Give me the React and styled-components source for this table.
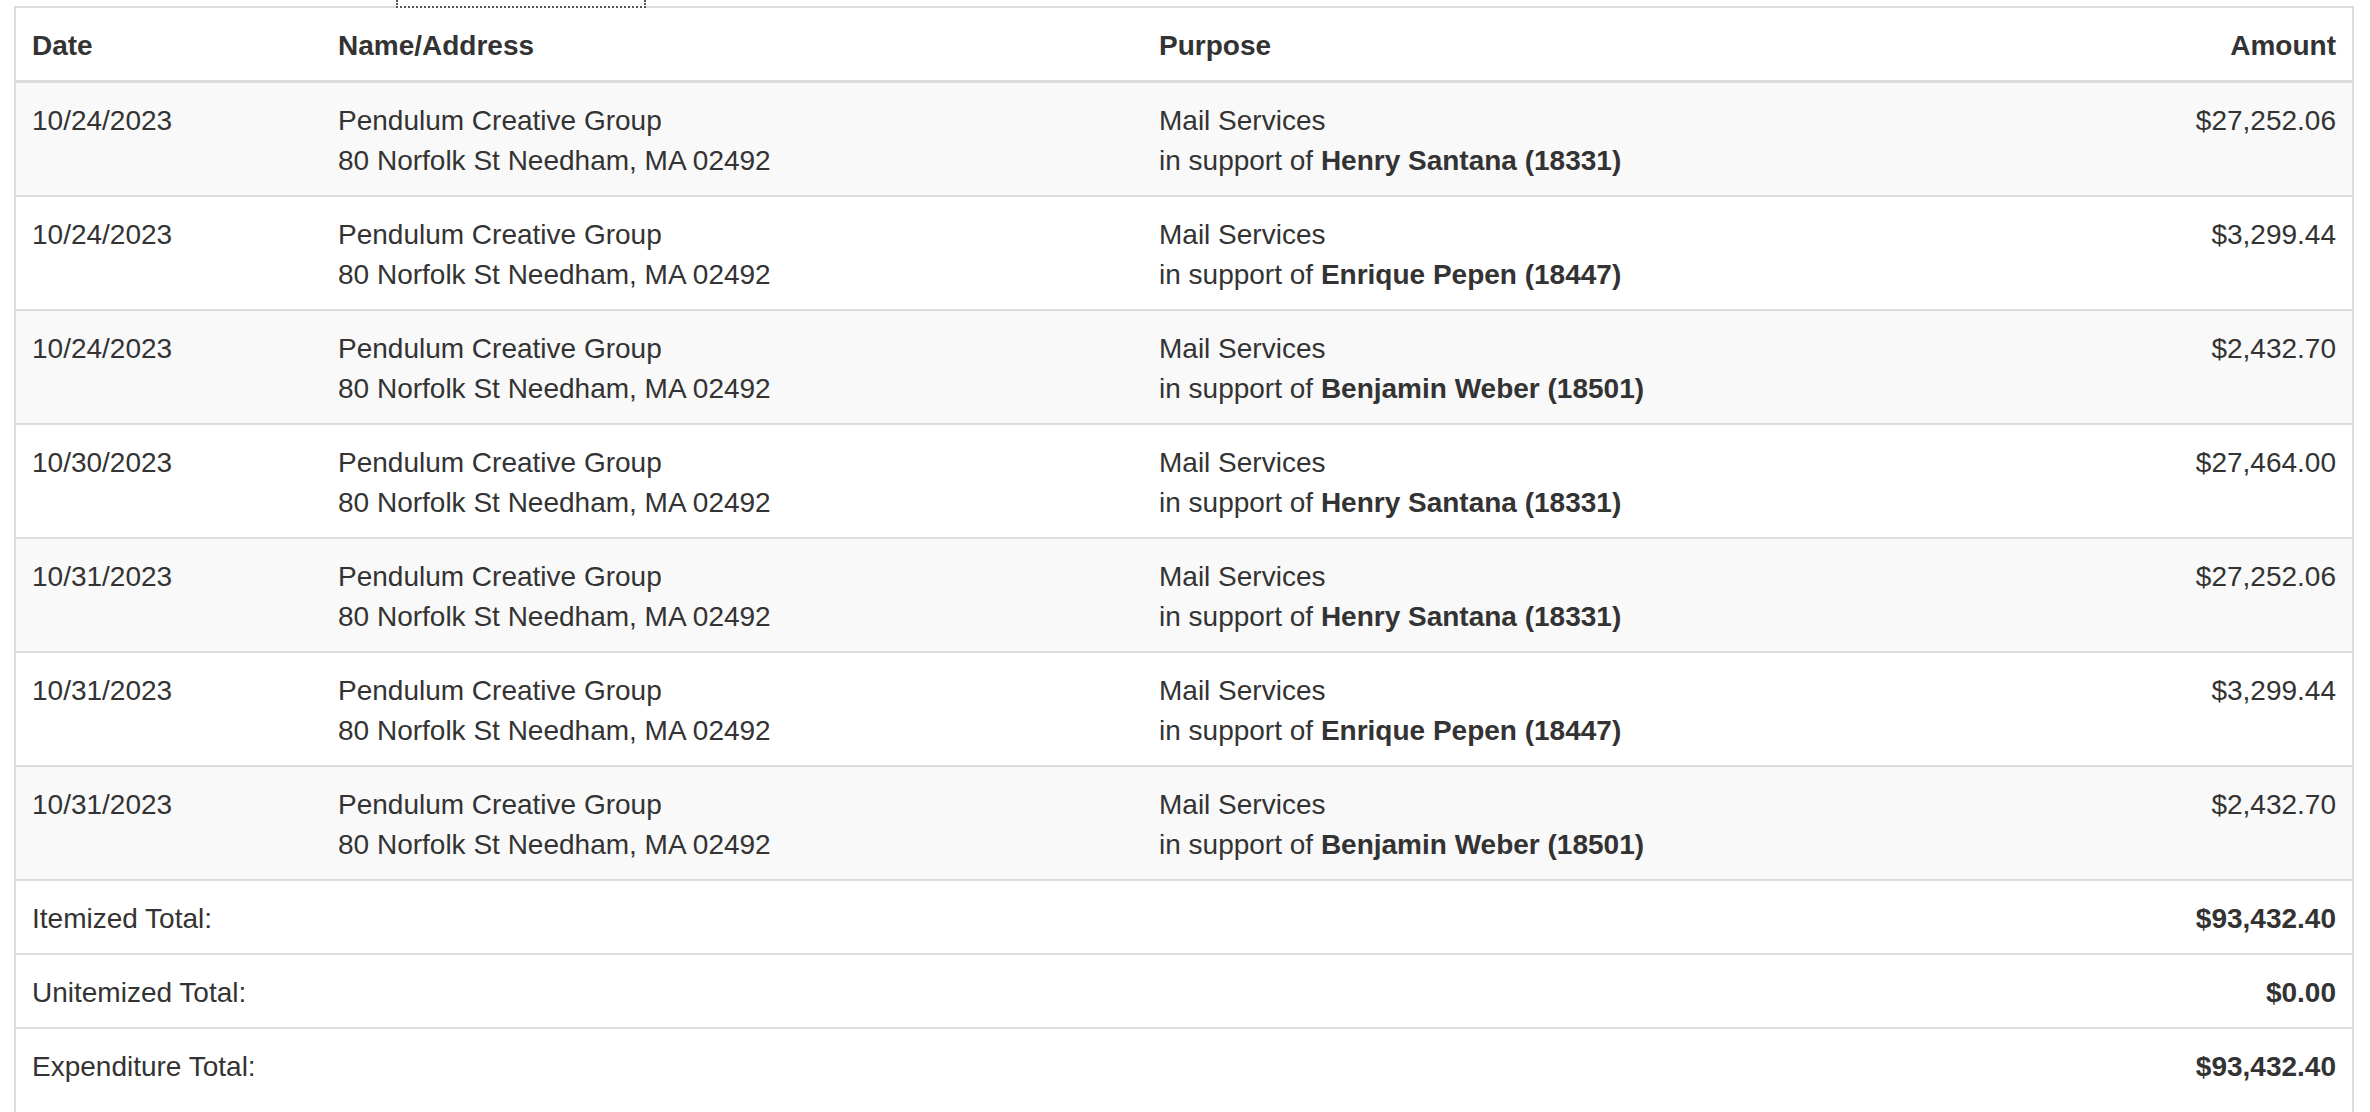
import React from 'react';
import styled, { createGlobalStyle } from 'styled-components';

const GlobalStyle = createGlobalStyle`
  html, body {
    margin: 0;
    padding: 0;
    background: #fff;
  }
  body {
    font-family: "Liberation Sans", Arial, Helvetica, sans-serif;
    font-size: 28px;
    line-height: 40px;
    color: #333;
  }
`;

const Page = styled.div`
  padding: 0 16px 0 14px;
`;

const TabBar = styled.div`
  display: flex;
  height: 6px;
`;

const ActiveTab = styled.div`
  position: relative;
  z-index: 1;
  margin-left: 382px;
  width: 250px;
  height: 8px;
  background: #fff;
  box-sizing: border-box;
  border: 2px dotted #555;
  border-top: none;
`;

const Panel = styled.div`
  border: 2px solid #ddd;
  border-bottom: none;
  padding-bottom: 40px;
`;

const Table = styled.table`
  width: 100%;
  border-collapse: collapse;
  table-layout: fixed;
`;

const HeadCell = styled.th`
  padding: 18px 16px 14px;
  font-weight: bold;
  text-align: ${p => (p.$right ? 'right' : 'left')};
  vertical-align: bottom;
  border-bottom: 3px solid #ddd;
`;

const Row = styled.tr`
  background: ${p => (p.$striped ? '#f9f9f9' : '#fff')};
  border-top: 2px solid #ddd;
  &:first-child {
    border-top: none;
  }
`;

const Cell = styled.td`
  padding: 18px 16px 14px;
  vertical-align: top;
  text-align: ${p => (p.$right ? 'right' : 'left')};
  font-weight: ${p => (p.$bold ? 'bold' : 'normal')};
  white-space: nowrap;
`;

const Line = styled.div`
  line-height: 40px;
`;

const Candidate = styled.strong`
  font-weight: bold;
`;

const TotalsBody = styled.tbody`
  border-top: 2px solid #ddd;
`;

const rows = [
  { date: '10/24/2023', cand: 'Henry Santana (18331)', amount: '$27,252.06' },
  { date: '10/24/2023', cand: 'Enrique Pepen (18447)', amount: '$3,299.44' },
  { date: '10/24/2023', cand: 'Benjamin Weber (18501)', amount: '$2,432.70' },
  { date: '10/30/2023', cand: 'Henry Santana (18331)', amount: '$27,464.00' },
  { date: '10/31/2023', cand: 'Henry Santana (18331)', amount: '$27,252.06' },
  { date: '10/31/2023', cand: 'Enrique Pepen (18447)', amount: '$3,299.44' },
  { date: '10/31/2023', cand: 'Benjamin Weber (18501)', amount: '$2,432.70' },
];

const totals = [
  { label: 'Itemized Total:', value: '$93,432.40' },
  { label: 'Unitemized Total:', value: '$0.00' },
  { label: 'Expenditure Total:', value: '$93,432.40' },
];

export default function App() {
  return (
    <>
      <GlobalStyle />
      <Page>
        <TabBar>
          <ActiveTab />
        </TabBar>
        <Panel>
          <Table>
            <colgroup>
              <col style={{ width: 306 }} />
              <col style={{ width: 821 }} />
              <col />
              <col style={{ width: 360 }} />
            </colgroup>
            <thead>
              <tr>
                <HeadCell>Date</HeadCell>
                <HeadCell>Name/Address</HeadCell>
                <HeadCell>Purpose</HeadCell>
                <HeadCell $right>Amount</HeadCell>
              </tr>
            </thead>
            <tbody>
              {rows.map((r, i) => (
                <Row key={i} $striped={i % 2 === 0}>
                  <Cell>{r.date}</Cell>
                  <Cell>
                    <Line>Pendulum Creative Group</Line>
                    <Line>80 Norfolk St Needham, MA 02492</Line>
                  </Cell>
                  <Cell>
                    <Line>Mail Services</Line>
                    <Line>
                      in support of <Candidate>{r.cand}</Candidate>
                    </Line>
                  </Cell>
                  <Cell $right>{r.amount}</Cell>
                </Row>
              ))}
            </tbody>
            <TotalsBody>
              {totals.map(t => (
                <Row key={t.label}>
                  <Cell colSpan={3}>{t.label}</Cell>
                  <Cell $right $bold>{t.value}</Cell>
                </Row>
              ))}
            </TotalsBody>
          </Table>
        </Panel>
      </Page>
    </>
  );
}
